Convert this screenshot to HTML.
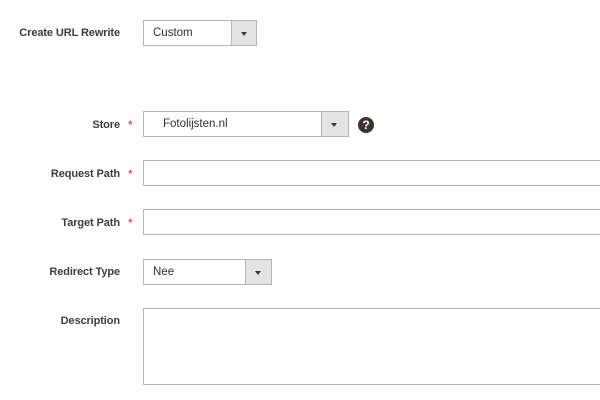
<!DOCTYPE html>
<html><head><style>
body{margin:0;width:600px;height:400px;background:#fff;font-family:"Liberation Sans",sans-serif;font-size:11px;color:#303030;position:relative;overflow:hidden}
.l{position:absolute;right:480px;font-weight:bold;white-space:nowrap;color:#3d3d3d;letter-spacing:-0.1px}
.s{position:absolute;left:128px;color:#e22626;font-size:12px}
.b{position:absolute;left:143px;border:1px solid #b5b5b5;background:#fff;box-sizing:border-box}
.sel .t{position:absolute;left:9px;top:6px;font-size:11.5px;color:#303030}
.sel .a{position:absolute;right:0;top:0;bottom:0;width:24px;background:#e3e3e3;border-left:1px solid #b5b5b5}
.sel .a:after{content:"";position:absolute;left:9px;top:11px;border-left:3px solid transparent;border-right:3px solid transparent;border-top:4px solid #41362f}
</style></head><body>
<div class="l" style="top:27px">Create URL Rewrite</div>
<div class="b sel" style="top:20px;width:114px;height:26px"><span class="t">Custom</span><span class="a"></span></div>

<div class="l" style="top:119px">Store</div><div class="s" style="top:118px">*</div>
<div class="b sel" style="top:111px;width:206px;height:26px"><span class="t" style="left:19px">Fotolijsten.nl</span><span class="a" style="width:26px"></span></div>
<div style="position:absolute;left:358px;top:117px;width:16px;height:16px;border-radius:50%;background:#3a3330;color:#fff;font-weight:bold;font-size:12px;text-align:center;line-height:16px">?</div>

<div class="l" style="top:168px">Request Path</div><div class="s" style="top:167px">*</div>
<div class="b" style="top:160px;width:470px;height:26px"></div>

<div class="l" style="top:217px">Target Path</div><div class="s" style="top:216px">*</div>
<div class="b" style="top:209px;width:470px;height:26px"></div>

<div class="l" style="top:266px">Redirect Type</div>
<div class="b sel" style="top:259px;width:129px;height:26px"><span class="t">Nee</span><span class="a" style="width:25px"></span></div>

<div class="l" style="top:315px">Description</div>
<div class="b" style="top:308px;width:470px;height:77px"></div>
</body></html>
